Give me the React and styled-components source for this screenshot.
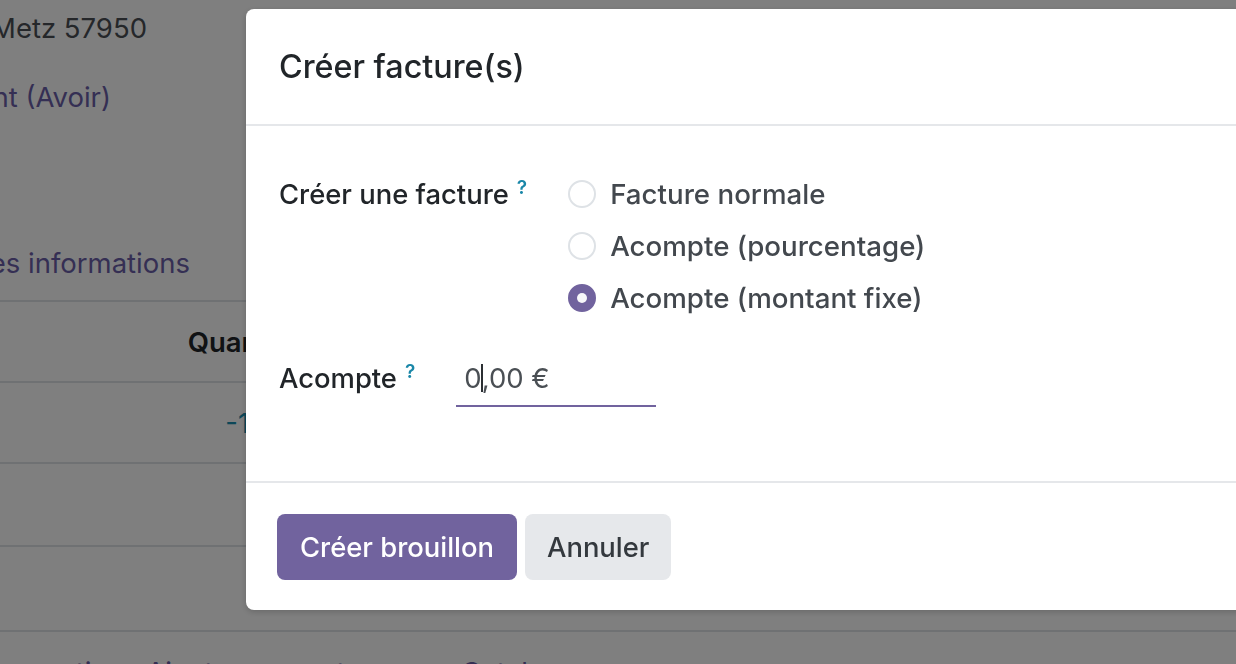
import React from "react";
import styled, { createGlobalStyle } from "styled-components";

const Global = createGlobalStyle`
  html, body { margin: 0; padding: 0; }
  body {
    width: 1236px;
    height: 664px;
    overflow: hidden;
    background: #fff;
    font-family: Inter, "Noto Sans", "Liberation Sans", sans-serif;
  }
`;

const Page = styled.div`
  width: 1236px;
  height: 664px;
  overflow: hidden;
  background: #fff;
  font-size: 27.5px;
  color: #4a4f55;
`;

const InfoLine = styled.div`
  display: flex;
  justify-content: flex-end;
  width: ${(p) => p.$end}px;
  height: ${(p) => p.$h}px;
  line-height: ${(p) => p.$h}px;
  margin-top: ${(p) => p.$mt || 0}px;
  white-space: nowrap;
  color: ${(p) => (p.$link ? "#6b5fa8" : "#4a4f55")};
`;

const Lines = styled.div`
  margin-top: 10px;
  border-top: 2px solid #dee2e6;
`;

const TRow = styled.div`
  display: grid;
  grid-template-columns: 167px 134px;
  align-items: center;
  height: ${(p) => p.$h}px;
  border-bottom: 2px solid #dee2e6;
`;

const QtyCell = styled.div`
  grid-column: 2;
  text-align: right;
  white-space: nowrap;
  font-weight: ${(p) => (p.$head ? 600 : 400)};
  color: ${(p) => (p.$head ? "#212529" : "#1a8fb0")};
  padding-right: ${(p) => (p.$head ? 0 : 10)}px;
`;

const AddRow = styled.div`
  display: flex;
  align-items: center;
  height: 80px;
  white-space: nowrap;
  color: #6b5fa8;
  margin-left: -128px;
  gap: 22px;
`;

const AddLink = styled.span`
  margin-right: ${(p) => p.$mr || 0}px;
`;

const Backdrop = styled.div`
  position: fixed;
  inset: 0;
  background: rgba(0, 0, 0, 0.5);
`;

const Dialog = styled.div`
  position: fixed;
  top: 9px;
  left: 246px;
  width: 1100px;
  height: 601px;
  background: #fff;
  border-radius: 8px;
  display: flex;
  flex-direction: column;
  box-shadow: 0 2px 6px rgba(0, 0, 0, 0.18);
`;

const Header = styled.header`
  height: 117px;
  box-sizing: border-box;
  padding: 0 33px;
  display: flex;
  align-items: center;
  border-bottom: 2px solid #e5e7ea;
`;

const Title = styled.h4`
  margin: 0;
  font-size: 32.3px;
  font-weight: 500;
  color: #212529;
`;

const Body = styled.div`
  flex: 1;
  padding: 42px 33px 0;
`;

const Group = styled.div`
  display: grid;
  grid-template-columns: auto 1fr;
  column-gap: 41px;
  align-items: start;
  margin-top: ${(p) => p.$mt || 0}px;
`;

const Label = styled.div`
  font-size: 27.4px;
  font-weight: 500;
  color: #212529;
  line-height: ${(p) => p.$lh}px;
  white-space: nowrap;
`;

const Help = styled.sup`
  font-size: 19px;
  font-weight: 600;
  color: #1a87a8;
  margin-left: 8px;
  vertical-align: 10px;
  line-height: 0;
`;

const RadioList = styled.div`
  display: flex;
  flex-direction: column;
`;

const RadioRow = styled.label`
  display: flex;
  align-items: center;
  gap: 14px;
  height: 52px;
  font-size: 27.7px;
  font-weight: 500;
  color: #43484e;
  white-space: nowrap;
`;

const RadioDot = styled.span`
  box-sizing: border-box;
  width: 28px;
  height: 28px;
  border-radius: 50%;
  border: 2px solid ${(p) => (p.$on ? "#71639e" : "#dee2e6")};
  background: ${(p) => (p.$on ? "#71639e" : "#fff")};
  display: flex;
  align-items: center;
  justify-content: center;
  &::after {
    content: "";
    width: 10px;
    height: 10px;
    border-radius: 50%;
    background: ${(p) => (p.$on ? "#f7f7fa" : "transparent")};
  }
`;

const Input = styled.div`
  box-sizing: border-box;
  width: 200px;
  height: 56px;
  border-bottom: 2px solid #71639e;
  padding-left: 8px;
  display: flex;
  align-items: center;
  font-size: 27.5px;
  color: #4a4f54;
  white-space: nowrap;
`;

const Caret = styled.span`
  display: inline-block;
  width: 0;
  height: 28px;
  border-left: 2px solid #2b2f33;
  margin: 0 -1px;
`;

const Footer = styled.footer`
  height: 129px;
  box-sizing: border-box;
  border-top: 2px solid #e5e7ea;
  padding: 0 31px;
  display: flex;
  align-items: center;
  gap: 8px;
`;

const Button = styled.button`
  height: 66px;
  padding: 0 ${(p) => (p.$primary ? 23 : 22)}px;
  border: none;
  border-radius: 8px;
  font-family: inherit;
  font-size: 27.4px;
  font-weight: 500;
  background: ${(p) => (p.$primary ? "#71639e" : "#e6e8eb")};
  color: ${(p) => (p.$primary ? "#fff" : "#34393e")};
`;

export default function App() {
  return (
    <>
      <Global />
      <Page>
        <InfoLine $end={147} $h={56}>Montigny-lès-Metz 57950</InfoLine>
        <InfoLine $end={111} $h={54} $mt={14} $link>Remboursement (Avoir)</InfoLine>
        <InfoLine $end={190} $h={54} $mt={112} $link>Autres informations</InfoLine>
        <Lines>
          <TRow $h={79}>
            <QtyCell $head>Quantité</QtyCell>
          </TRow>
          <TRow $h={79}>
            <QtyCell>-1,00</QtyCell>
          </TRow>
          <TRow $h={81} />
          <TRow $h={83} />
        </Lines>
        <AddRow>
          <AddLink>Ajouter une section</AddLink>
          <AddLink $mr={78}>Ajouter une note</AddLink>
          <AddLink>Catalogue</AddLink>
        </AddRow>
      </Page>
      <Backdrop />
      <Dialog role="dialog">
        <Header>
          <Title>Créer facture(s)</Title>
        </Header>
        <Body>
          <Group>
            <Label $lh={52}>
              Créer une facture<Help>?</Help>
            </Label>
            <RadioList>
              <RadioRow>
                <RadioDot />
                Facture normale
              </RadioRow>
              <RadioRow>
                <RadioDot />
                Acompte (pourcentage)
              </RadioRow>
              <RadioRow>
                <RadioDot $on />
                Acompte (montant fixe)
              </RadioRow>
            </RadioList>
          </Group>
          <Group $mt={27}>
            <Label $lh={54}>
              Acompte<Help>?</Help>
            </Label>
            <Input>
              0<Caret />,00 €
            </Input>
          </Group>
        </Body>
        <Footer>
          <Button $primary>Créer brouillon</Button>
          <Button>Annuler</Button>
        </Footer>
      </Dialog>
    </>
  );
}
